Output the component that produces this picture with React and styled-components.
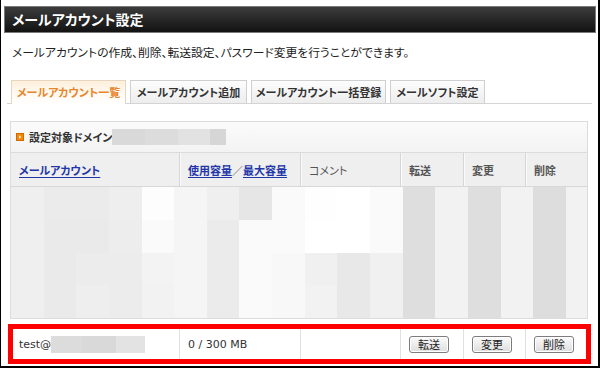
import React from "react";
import styled, { createGlobalStyle } from "styled-components";

const GlobalStyle = createGlobalStyle`
  html, body {
    margin: 0;
    padding: 0;
    background: #fff;
  }
  body {
    font-family: "Noto Sans CJK JP", "DejaVu Sans", sans-serif;
    font-feature-settings: "palt" 1;
    color: #222;
  }
`;

const Frame = styled.div`
  box-sizing: border-box;
  width: 600px;
  height: 368px;
  border-left: 1px solid #000;
  border-right: 2px solid #000;
  border-bottom: 2px solid #000;
  padding-top: 6px;
  display: flex;
  flex-direction: column;
  overflow: hidden;
`;

const TitleBar = styled.h1`
  box-sizing: border-box;
  margin: 0 2px 0 3px;
  height: 27px;
  border: 1px solid #7a7a7a;
  background: linear-gradient(#3c3c3c, #121212);
  color: #fff;
  font-size: 14px;
  font-weight: bold;
  line-height: 25px;
  padding-left: 7px;
`;

const Description = styled.p`
  margin: 12px 0 0 11px;
  font-size: 11.8px;
  line-height: 14px;
  color: #222;
`;

const TabBar = styled.div`
  box-sizing: border-box;
  margin: 21px 6px 0 6px;
  height: 24px;
  padding-left: 4px;
  display: flex;
  align-items: flex-end;
  gap: 4px;
  border-bottom: 1px solid #d4d4d4;
`;

const Tab = styled.div`
  box-sizing: border-box;
  height: ${(p) => (p.$active ? "24px" : "23px")};
  margin-bottom: ${(p) => (p.$active ? "-1px" : "0")};
  width: ${(p) => p.$width}px;
  border: 1px solid ${(p) => (p.$active ? "#e6d6c0" : "#cfcfcf")};
  border-bottom: none;
  background: ${(p) =>
    p.$active
      ? "linear-gradient(#fdf0dc, #fffaf3 60%, #fff)"
      : "linear-gradient(#fdfdfd, #ededed)"};
  color: ${(p) => (p.$active ? "#e8862c" : "#333")};
  font-size: 11px;
  font-weight: bold;
  line-height: 22px;
  text-align: center;
  white-space: nowrap;
`;

const Panel = styled.div`
  box-sizing: border-box;
  margin: 17px 0 0 9px;
  width: 578px;
  border: 1px solid #dcdcdc;
`;

const PanelHeader = styled.div`
  height: 30px;
  border-bottom: 1px solid #dcdcdc;
  background: linear-gradient(#fbfbfb, #f3f3f3);
  display: flex;
  align-items: center;
  padding-left: 5px;
  font-size: 11px;
  font-weight: bold;
  color: #333;
`;

const HeaderIcon = styled.svg`
  width: 8px;
  height: 8px;
  margin-right: 5px;
  flex: none;
`;

const Blur = styled.span`
  display: flex;
  height: ${(p) => p.$h}px;
`;

const BlurBlock = styled.span`
  width: ${(p) => p.$w}px;
  background: ${(p) => p.$shade};
`;

const columns = "168px 121px 100px 63px 62px 1fr";

const HeaderRow = styled.div`
  display: grid;
  grid-template-columns: ${columns};
  height: 33px;
  border-bottom: 1px solid #d8d8d8;
  background: #efefef;
`;

const HeaderCell = styled.div`
  display: flex;
  align-items: center;
  padding-left: 8px;
  border-left: ${(p) => (p.$first ? "none" : "1px solid #d6d6d6")};
  box-shadow: ${(p) => (p.$first ? "none" : "inset 1px 0 #fafafa")};
  font-size: 11px;
  font-weight: ${(p) => (p.$plain ? "normal" : "bold")};
  color: #555;
  white-space: nowrap;
`;

const SortLink = styled.a`
  color: #2336a8;
  text-decoration: underline;
  text-underline-offset: 2px;
  cursor: pointer;
`;

const Mosaic = styled.div`
  display: grid;
  grid-template-columns: repeat(17, 32.65px) 1fr;
  grid-template-rows: repeat(4, 1fr);
  height: 131px;
`;

const Tile = styled.div`
  background: ${(p) => p.$shade};
`;

const Highlight = styled.div`
  box-sizing: border-box;
  margin: 5px 0 0 7px;
  width: 583px;
  height: 40px;
  border: 5px solid #f00;
  display: grid;
  grid-template-columns: 166px 121px 100px 63px 62px 1fr;
  background: #fff;
`;

const RowCell = styled.div`
  display: flex;
  align-items: center;
  padding-left: ${(p) => (p.$first ? 6 : 8)}px;
  border-left: ${(p) => (p.$first ? "none" : "1px solid #e0e0e0")};
  font-family: "DejaVu Sans", sans-serif;
  font-size: 11px;
  color: #333;
  white-space: nowrap;
`;

const ActionButton = styled.button`
  box-sizing: border-box;
  width: 40px;
  height: 17px;
  padding: 0;
  border: 1px solid #7d7d7d;
  border-radius: 3px;
  background: linear-gradient(#fbfbfb, #dedede);
  box-shadow: inset 0 0 0 1px #fff;
  font-family: "Noto Sans CJK JP", sans-serif;
  font-size: 11px;
  line-height: 15px;
  color: #222;
`;

const tabs = [
  { label: "メールアカウント一覧", width: 115, active: true },
  { label: "メールアカウント追加", width: 117 },
  { label: "メールアカウント一括登録", width: 135 },
  { label: "メールソフト設定", width: 95 },
];

const mosaicRows = [
  ["#efefef", "#ebebeb", "#ebebeb", "#eeeeee", "#fdfdfd", "#f5f5f5", "#efefef", "#e6e6e6", "#fafafa", "#fefefe", "#ffffff", "#fafafa", "#dedede", "#f2f2f2", "#dedede", "#f2f2f2", "#dddddd", "#f2f2f2"],
  ["#efefef", "#eaeaea", "#eaeaea", "#ededed", "#fafafa", "#f5f5f5", "#ebebeb", "#fafafa", "#fafafa", "#ffffff", "#ffffff", "#fafafa", "#dedede", "#f2f2f2", "#dedede", "#f2f2f2", "#dddddd", "#f2f2f2"],
  ["#efefef", "#eaeaea", "#ececec", "#ececec", "#f3f3f3", "#f5f5f5", "#ebebeb", "#fafafa", "#f8f8f8", "#f0f0f0", "#e8e8e8", "#f0f0f0", "#dedede", "#f2f2f2", "#dedede", "#f2f2f2", "#dddddd", "#f2f2f2"],
  ["#efefef", "#eaeaea", "#eeeeee", "#ececec", "#f2f2f2", "#f5f5f5", "#ebebeb", "#fafafa", "#f8f8f8", "#f2f2f2", "#e8e8e8", "#f0f0f0", "#dedede", "#f2f2f2", "#dedede", "#f2f2f2", "#dddddd", "#f2f2f2"],
];

const domainBlur = [
  { w: 33, shade: "#d9d9d9" },
  { w: 33, shade: "#dcdcdc" },
  { w: 32, shade: "#e2e2e2" },
  { w: 16, shade: "#d6d6d6" },
];

const addressBlur = [
  { w: 31, shade: "#dcdcdc" },
  { w: 34, shade: "#d9d9d9" },
  { w: 29, shade: "#e3e3e3" },
];

export default function App() {
  return (
    <>
      <GlobalStyle />
      <Frame>
        <TitleBar>メールアカウント設定</TitleBar>
        <Description>
          メールアカウントの作成、削除、転送設定、パスワード変更を行うことができます。
        </Description>

        <TabBar>
          {tabs.map((t) => (
            <Tab key={t.label} $active={t.active} $width={t.width}>
              {t.label}
            </Tab>
          ))}
        </TabBar>

        <Panel>
          <PanelHeader>
            <HeaderIcon viewBox="0 0 8 8">
              <rect x="0" y="0" width="8" height="8" fill="#f0880a" />
              <rect x="0.5" y="0.5" width="7" height="7" fill="none" stroke="#d26a00" />
              <path d="M3 2.2 L5.4 4 L3 5.8 Z" fill="#fff3d6" />
            </HeaderIcon>
            設定対象ドメイン
            <Blur $h={16}>
              {domainBlur.map((b, i) => (
                <BlurBlock key={i} $w={b.w} $shade={b.shade} />
              ))}
            </Blur>
          </PanelHeader>

          <HeaderRow>
            <HeaderCell $first>
              <SortLink>メールアカウント</SortLink>
            </HeaderCell>
            <HeaderCell>
              <SortLink>使用容量</SortLink>／<SortLink>最大容量</SortLink>
            </HeaderCell>
            <HeaderCell $plain>コメント</HeaderCell>
            <HeaderCell>転送</HeaderCell>
            <HeaderCell>変更</HeaderCell>
            <HeaderCell>削除</HeaderCell>
          </HeaderRow>

          <Mosaic>
            {mosaicRows.flatMap((row, r) =>
              row.map((shade, c) => <Tile key={`${r}-${c}`} $shade={shade} />)
            )}
          </Mosaic>
        </Panel>

        <Highlight>
          <RowCell $first>
            test@
            <Blur $h={17}>
              {addressBlur.map((b, i) => (
                <BlurBlock key={i} $w={b.w} $shade={b.shade} />
              ))}
            </Blur>
          </RowCell>
          <RowCell>0 / 300 MB</RowCell>
          <RowCell />
          <RowCell>
            <ActionButton>転送</ActionButton>
          </RowCell>
          <RowCell>
            <ActionButton>変更</ActionButton>
          </RowCell>
          <RowCell>
            <ActionButton>削除</ActionButton>
          </RowCell>
        </Highlight>
      </Frame>
    </>
  );
}
